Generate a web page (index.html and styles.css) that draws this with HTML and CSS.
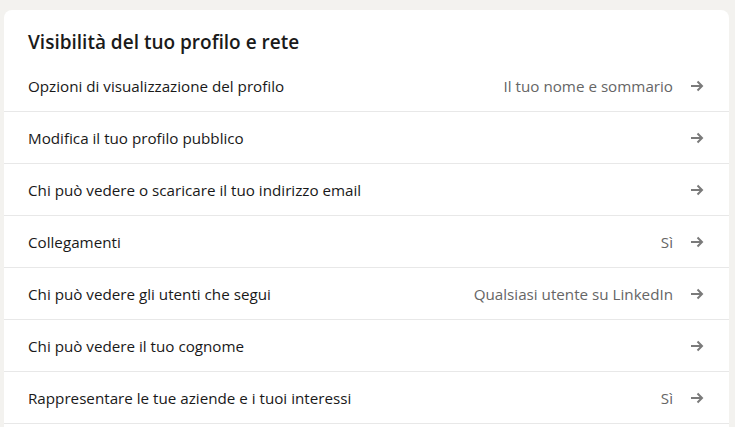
FILE: index.html
```html
<!DOCTYPE html>
<html lang="it">
<head>
<meta charset="utf-8">
<title>Visibilità del tuo profilo e rete</title>
<link rel="stylesheet" href="styles.css">
</head>
<body>
<section class="card">
  <h2 class="card-title">Visibilità del tuo profilo e rete</h2>
  <ul class="list">
    <li class="row"><span class="label">Opzioni di visualizzazione del profilo</span><span class="value">Il tuo nome e sommario</span><svg class="arrow" viewBox="0 0 16 16"><path d="M2 8h11.5M8.5 3.5L13 8l-4.5 4.5"/></svg></li>
    <li class="row"><span class="label">Modifica il tuo profilo pubblico</span><span class="value"></span><svg class="arrow" viewBox="0 0 16 16"><path d="M2 8h11.5M8.5 3.5L13 8l-4.5 4.5"/></svg></li>
    <li class="row"><span class="label">Chi può vedere o scaricare il tuo indirizzo email</span><span class="value"></span><svg class="arrow" viewBox="0 0 16 16"><path d="M2 8h11.5M8.5 3.5L13 8l-4.5 4.5"/></svg></li>
    <li class="row"><span class="label">Collegamenti</span><span class="value">Sì</span><svg class="arrow" viewBox="0 0 16 16"><path d="M2 8h11.5M8.5 3.5L13 8l-4.5 4.5"/></svg></li>
    <li class="row"><span class="label">Chi può vedere gli utenti che segui</span><span class="value">Qualsiasi utente su LinkedIn</span><svg class="arrow" viewBox="0 0 16 16"><path d="M2 8h11.5M8.5 3.5L13 8l-4.5 4.5"/></svg></li>
    <li class="row"><span class="label">Chi può vedere il tuo cognome</span><span class="value"></span><svg class="arrow" viewBox="0 0 16 16"><path d="M2 8h11.5M8.5 3.5L13 8l-4.5 4.5"/></svg></li>
    <li class="row"><span class="label">Rappresentare le tue aziende e i tuoi interessi</span><span class="value">Sì</span><svg class="arrow" viewBox="0 0 16 16"><path d="M2 8h11.5M8.5 3.5L13 8l-4.5 4.5"/></svg></li>
  </ul>
</section>
</body>
</html>
```
FILE: styles.css
```css
html, body {
  margin: 0;
  padding: 0;
  background: #f3f2ef;
  height: 100%;
  overflow: hidden;
}
body {
  font-family: "Open Sans", "Noto Sans", sans-serif;
  color: #1d1d1d;
  padding: 10px 6px 0 4px;
}
.card {
  background: #fff;
  border-radius: 8px;
  padding-bottom: 40px;
}
.card-title {
  margin: 0;
  padding: 20px 24px 6px;
  font-size: 19px;
  line-height: 24px;
  font-weight: 600;
  color: #1a1a1a;
}
.list {
  list-style: none;
  margin: 0;
  padding: 0;
}
.row {
  display: flex;
  align-items: center;
  height: 51px;
  padding: 0 24px;
  border-bottom: 1px solid #e8e8e8;
  font-size: 15.2px;
}
.label {
  flex: 1;
  color: #191919;
}
.value {
  color: #666;
  margin-right: 16px;
}
.arrow {
  width: 16px;
  height: 16px;
  fill: none;
  stroke: #7a7a7a;
  stroke-width: 2;
  flex: none;
}
```
